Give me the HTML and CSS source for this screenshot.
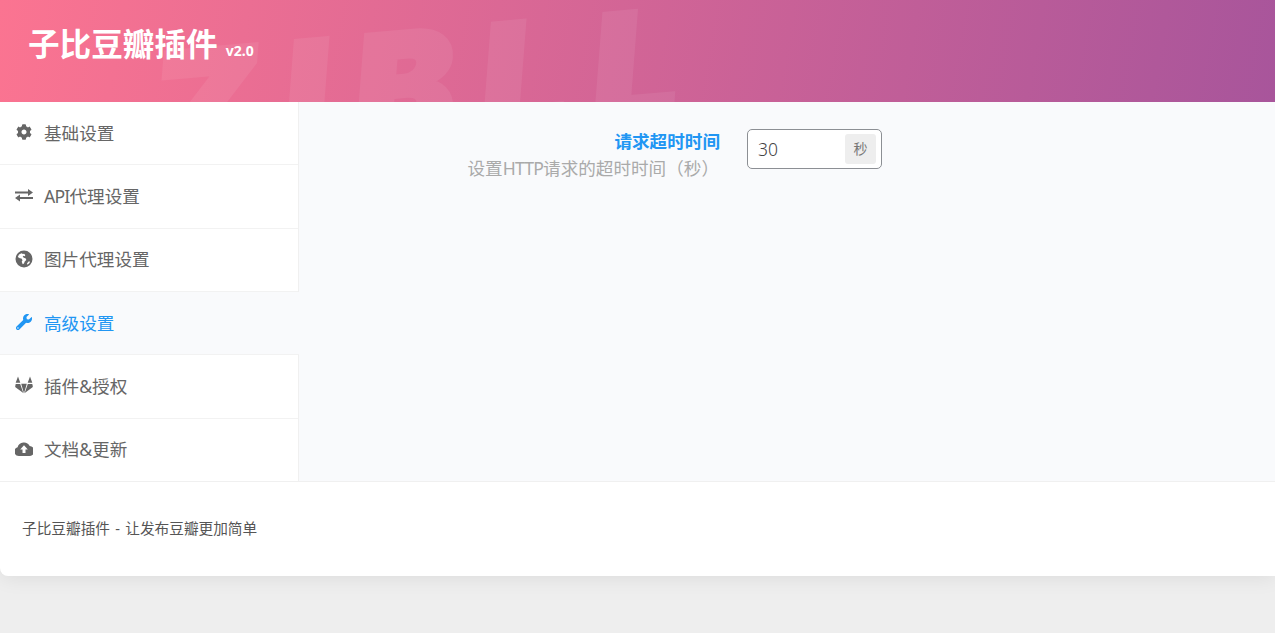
FILE: index.html
```html
<!DOCTYPE html>
<html lang="zh-CN">
<head>
    <meta charset="UTF-8">
    <title>子比豆瓣插件</title>
    <link rel="stylesheet" href="styles.css">
</head>
<body>
    <div class="wrap">
        <header class="header">
            <span class="watermark" aria-hidden="true">ZIBLL</span>
            <h1>子比豆瓣插件 <small>v2.0</small></h1>
        </header>
        <div class="main">
            <nav class="nav">
                <a class="nav-item">
                    <svg class="icon" viewBox="-30 -30 572 572"><path d="M487.4 315.7l-42.6-24.6c4.3-23.2 4.3-47 0-70.2l42.6-24.6c4.9-2.8 7.1-8.6 5.5-14-11.1-35.6-30-67.8-54.7-94.6-3.8-4.1-10-5.1-14.8-2.3L380.8 110c-17.9-15.4-38.5-27.3-60.8-35.1V25.8c0-5.6-3.9-10.5-9.4-11.7-36.7-8.2-74.3-7.8-109.2 0-5.5 1.2-9.4 6.1-9.4 11.7V75c-22.2 7.9-42.8 19.8-60.8 35.1L88.7 85.5c-4.9-2.8-11-1.9-14.8 2.3-24.7 26.7-43.6 58.9-54.7 94.6-1.7 5.4.6 11.2 5.5 14L67.3 221c-4.3 23.2-4.3 47 0 70.2l-42.6 24.6c-4.9 2.8-7.1 8.6-5.5 14 11.1 35.6 30 67.8 54.7 94.6 3.8 4.1 10 5.1 14.8 2.3l42.6-24.6c17.9 15.4 38.5 27.3 60.8 35.1v49.2c0 5.6 3.9 10.5 9.4 11.7 36.7 8.2 74.3 7.8 109.2 0 5.5-1.2 9.4-6.1 9.4-11.7v-49.2c22.2-7.9 42.8-19.8 60.8-35.1l42.6 24.6c4.9 2.8 11 1.9 14.8-2.3 24.7-26.7 43.6-58.9 54.7-94.6 1.5-5.5-.7-11.3-5.6-14.1zM256 336c-44.1 0-80-35.9-80-80s35.9-80 80-80 80 35.9 80 80-35.9 80-80 80z"/></svg>
                    基础设置
                </a>
                <a class="nav-item">
                    <svg class="icon" viewBox="0 0 18 18"><path d="M13 3l5 3.500-5 3.500V7.500H0v-2h13zM5 8.500V11h13v2H5v2.500L0 12z"/></svg>
                    <span><span class="tight">API</span>代理设置</span>
                </a>
                <a class="nav-item">
                    <svg class="icon" viewBox="1 1 18 18"><path fill-rule="evenodd" d="M10 1.500a8.500 8.500 0 1 1 0 17 8.500 8.500 0 0 1 0-17zM7.500 4.200L5 5.500 3.800 8l2 1.200 1.700.3 1 1.700-.8 1.500 1 2.600 1.300-.8.700-2 1.600-1.500-.5-1.600-1.900-.6-1.200-1 .8-1 1.300.4.500-1.300-1.200-1.200-1.200.2zM14.500 12.500l-1.500 2 .5 1.300 2-1.800.5-1.500z"/></svg>
                    图片代理设置
                </a>
                <a class="nav-item active">
                    <svg class="icon" viewBox="-30 -30 572 572"><path d="M507.73 109.1c-2.24-9.03-13.54-12.09-20.12-5.51l-74.36 74.36-67.88-11.31-11.31-67.88 74.36-74.36c6.62-6.62 3.43-17.9-5.66-20.16-47.38-11.74-99.55.91-136.58 37.93-39.64 39.64-50.55 97.1-34.05 147.2L18.74 402.76c-24.99 24.99-24.99 65.51 0 90.5 24.99 24.99 65.51 24.99 90.5 0l213.21-213.21c50.12 16.71 107.47 5.68 147.37-34.22 37.07-37.07 49.7-89.32 37.91-136.73zM64 472c-13.25 0-24-10.75-24-24 0-13.26 10.75-24 24-24s24 10.74 24 24c0 13.25-10.75 24-24 24z"/></svg>
                    高级设置
                </a>
                <a class="nav-item">
                    <svg class="icon" viewBox="0 0 18 18"><path d="M3 .5L5.300 6.800H.7L3 .5zM15 .5l2.300 6.300h-4.600L15 .5zM6.200 7.800h5.600L9 17.500zM5.200 8L8.300 17 .8 11.600Q0 11 .2 10.200L.7 8zM12.800 8h4.500l.5 2.200q.2.800-.6 1.400L9.700 17z"/></svg>
                    插件&amp;授权
                </a>
                <a class="nav-item">
                    <svg class="icon" viewBox="1 1 18 18"><path fill-rule="evenodd" d="M5 17a4.500 4.500 0 0 1-1.400-8.800A6.500 6.500 0 0 1 15.700 7a5 5 0 0 1-.7 10zM10 6.200L6.200 10.500h2.300V14h3v-3.500h2.300z"/></svg>
                    文档&amp;更新
                </a>
            </nav>
            <section class="content">
                <div class="field">
                    <div class="field-label">
                        <div class="field-title">请求超时时间</div>
                        <div class="field-desc">设置<span class="tight">HTTP</span>请求的超时时间（秒）</div>
                    </div>
                    <div class="field-input">
                        <input type="text" value="30">
                        <span class="unit">秒</span>
                    </div>
                </div>
            </section>
        </div>
        <footer class="footer">子比豆瓣插件 - 让发布豆瓣更加简单</footer>
    </div>
</body>
</html>
```
FILE: styles.css
```css
body {
    margin: 0;
    height: 633px;
    overflow: hidden;
    background: #eeeeee;
    font-family: "Noto Sans", "Noto Sans CJK SC", sans-serif;
    color: #555;
}
.wrap {
    background: #fff;
    border-radius: 0 0 0 8px;
    box-shadow: 0 2px 20px rgba(0, 0, 0, 0.08);
    overflow: hidden;
}
.header {
    position: relative;
    height: 102px;
    overflow: hidden;
    display: flex;
    align-items: center;
    padding-left: 28px;
    background: linear-gradient(100deg, #fb7491 0%, #a8559b 100%);
}
.header h1 {
    position: relative;
    margin: 0 0 14px;
    font-size: 31.6px;
    line-height: 1.4;
    font-weight: 700;
    color: #fff;
}
.header small {
    font-size: 14px;
}
.watermark {
    position: absolute;
    left: 146px;
    top: 35px;
    font-family: "Inter", sans-serif;
    font-size: 150px;
    line-height: 1;
    font-weight: 900;
    font-style: italic;
    letter-spacing: 27px;
    color: #fff;
    -webkit-text-stroke: 6px #fff;
    opacity: 0.065;
    transform: rotate(-5deg);
    transform-origin: left top;
    white-space: nowrap;
}
.main {
    display: flex;
    height: 379px;
}
.nav {
    width: 298px;
    border-right: 1px solid #f0f0f0;
    display: flex;
    flex-direction: column;
}
.nav-item {
    flex: 1;
    display: flex;
    align-items: center;
    gap: 11px;
    padding: 0 0 2px 15px;
    font-size: 17.6px;
    color: #666;
    border-bottom: 1px solid #f2f2f2;
}
.nav-item:last-child {
    border-bottom: 0;
}
.nav-item.active {
    margin-right: -1px;
    color: #2196f3;
    background: #f9fafc;
}
.tight {
    letter-spacing: -0.8px;
}
.icon {
    width: 18px;
    height: 18px;
    fill: #666;
    flex: none;
}
.active .icon {
    fill: #2196f3;
}
.content {
    flex: 1;
    background: #f9fafc;
    padding-top: 26px;
}
.field {
    display: flex;
    gap: 27px;
}
.field-label {
    width: 421px;
    text-align: right;
    font-size: 17.6px;
    line-height: 27px;
}
.field-title {
    color: #2196f3;
    font-weight: 700;
}
.field-desc {
    color: #aaa;
    padding-right: 1px;
}
.field-input {
    position: relative;
    width: 135px;
    height: 40px;
    margin-top: 1px;
}
.field-input input {
    box-sizing: border-box;
    width: 100%;
    height: 100%;
    padding: 0 40px 0 10px;
    border: 1px solid #8c8f94;
    border-radius: 5px;
    background: #fff;
    font-family: inherit;
    font-size: 17.5px;
    font-weight: 300;
    color: #444;
    outline: none;
}
.unit {
    position: absolute;
    right: 6px;
    top: 5px;
    width: 31px;
    height: 30px;
    border-radius: 3px;
    background: #eeeeee;
    font-size: 14px;
    line-height: 30px;
    text-align: center;
    color: #777;
}
.footer {
    height: 92px;
    border-top: 1px solid #f0f0f0;
    padding: 0 0 2px 22px;
    display: flex;
    align-items: center;
    font-size: 14.67px;
    word-spacing: 1.5px;
    line-height: 1;
    color: #555;
}
```
